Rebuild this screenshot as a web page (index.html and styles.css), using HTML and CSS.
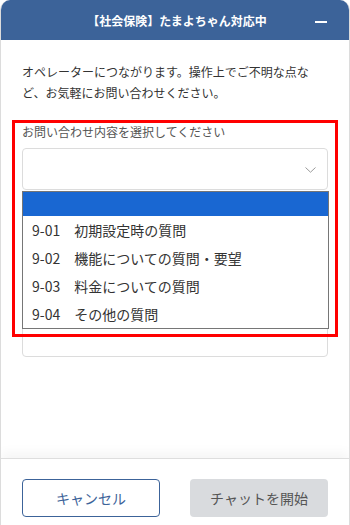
FILE: index.html
```html
<!DOCTYPE html>
<html lang="ja">
<head>
<meta charset="utf-8">
<title>チャット</title>
<link rel="stylesheet" href="styles.css">
</head>
<body>
<div class="panel">
  <header class="header">
    <span></span>
    <h1 class="title">【社会保険】たまよちゃん対応中</h1>
    <button class="minimize" aria-label="最小化"><span class="bar"></span></button>
  </header>
  <main class="content">
    <p class="intro">オペレーターにつながります。操作上でご不明な点など、お気軽にお問い合わせください。</p>
    <label class="label">お問い合わせ内容を選択してください</label>
    <div class="field">
      <div class="select">
        <svg class="chevron" width="11" height="6" viewBox="0 0 11 6"><path d="M0.5 0.5 L5.5 5.2 L10.5 0.5" fill="none" stroke="#9a9a9a" stroke-width="1"/></svg>
      </div>
      <ul class="dropdown">
        <li class="opt opt-blank"></li>
        <li class="opt">9-01　初期設定時の質問</li>
        <li class="opt">9-02　機能についての質問・要望</li>
        <li class="opt">9-03　料金についての質問</li>
        <li class="opt">9-04　その他の質問</li>
      </ul>
    </div>
    <div class="textarea"></div>
  </main>
  <footer class="footer">
    <button class="btn btn-cancel">キャンセル</button>
    <button class="btn btn-start">チャットを開始</button>
  </footer>
  <div class="highlight"></div>
</div>
</body>
</html>
```
FILE: styles.css
```css
* { box-sizing: border-box; }
html, body { margin: 0; padding: 0; background: #fff; }
body {
  font-family: "Noto Sans CJK JP", "Noto Sans", sans-serif;
  color: #333;
}
.panel {
  position: relative;
  width: 350px;
  height: 525px;
  border-left: 1px solid #dcdcdc;
  border-right: 1px solid #dcdcdc;
  border-radius: 10px 10px 0 0;
  overflow: hidden;
  display: flex;
  flex-direction: column;
}
.header {
  height: 40px;
  flex: none;
  background: #3c6399;
  display: grid;
  grid-template-columns: 1fr auto 1fr;
  align-items: center;
  padding-left: 4px;
}
.title {
  margin: 0;
  color: #fff;
  font-size: 12px;
  font-weight: bold;
  line-height: 1;
  margin-top: 1px;
}
.minimize {
  justify-self: end;
  margin-right: 21px;
  width: 14px;
  height: 20px;
  padding: 0;
  border: 0;
  background: none;
  display: flex;
  align-items: center;
  justify-content: center;
  margin-top: 4px;
}
.minimize .bar {
  width: 12px;
  height: 2px;
  background: #fff;
}
.content {
  flex: 1;
  padding: 21px 21px 0;
  display: flex;
  flex-direction: column;
}
.intro {
  margin: 0;
  font-size: 12px;
  line-height: 21px;
  color: #333;
}
.label {
  margin-top: 20px;
  font-size: 12px;
  line-height: 18px;
  color: #555;
}
.field {
  position: relative;
  margin-top: 7px;
}
.select {
  height: 42px;
  border: 1px solid #dcdcdc;
  border-radius: 4px;
  display: flex;
  align-items: center;
  justify-content: flex-end;
  padding-right: 11px;
}
.chevron { display: block; margin-top: 1px; }
.dropdown {
  position: absolute;
  left: 0;
  top: calc(100% + 1px);
  width: 307px;
  margin: 0;
  padding: 0;
  list-style: none;
  background: #fff;
  border: 1px solid #767676;
  z-index: 2;
}
.opt {
  height: 28px;
  line-height: 28px;
  padding-left: 9px;
  font-size: 14px;
  color: #333;
  white-space: nowrap;
}
.opt-blank {
  height: 24px;
  background: #1967d2;
}
.textarea {
  margin-top: 12px;
  height: 155px;
  border: 1px solid #dcdcdc;
  border-radius: 4px;
}
.footer {
  flex: none;
  height: 67px;
  border-top: 1px solid #dedede;
  box-shadow: 0 -6px 10px rgba(0, 0, 0, 0.04);
  display: flex;
  gap: 30px;
  padding: 20px 21px 0;
  background: #fff;
}
.btn {
  width: 138px;
  height: 38px;
  border-radius: 4px;
  font-family: inherit;
  font-size: 14px;
  padding: 0;
}
.btn-cancel {
  background: #fff;
  border: 1px solid #3c6399;
  color: #3c6399;
}
.btn-start {
  background: #d9dbde;
  border: 0;
  color: #555;
}
.highlight {
  position: absolute;
  left: 11px;
  top: 120px;
  width: 326px;
  height: 217px;
  border: 3px solid #ff0000;
  z-index: 3;
  pointer-events: none;
}
```
